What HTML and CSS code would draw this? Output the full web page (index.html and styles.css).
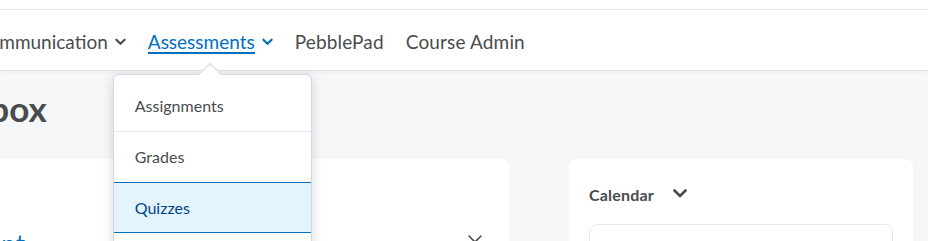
FILE: index.html
```html
<!DOCTYPE html>
<html lang="en">
<head>
  <meta charset="UTF-8" />
  <meta name="viewport" content="width=device-width, initial-scale=1.0" />
  <title>Sandbox</title>
  <link rel="stylesheet" href="styles.css">
</head>
<body>
  <div class="topstrip"></div>

  <nav class="navbar">
    <ul class="nav-list">
      <li class="nav-item">Communication <span class="chev"><svg viewBox="0 0 12 8" width="11" height="8"><path d="M1.5 1.5 6 6l4.5-4.5" fill="none" stroke="currentColor" stroke-width="2.4" stroke-linecap="round" stroke-linejoin="round"/></svg></span></li>
      <li class="nav-item active">
        <span class="nav-label">Assessments</span> <span class="chev"><svg viewBox="0 0 12 8" width="11" height="8"><path d="M1.5 1.5 6 6l4.5-4.5" fill="none" stroke="currentColor" stroke-width="2.4" stroke-linecap="round" stroke-linejoin="round"/></svg></span>
        <div class="dropdown">
          <span class="dropdown-arrow"></span>
          <ul class="menu">
            <li class="menu-item">Assignments</li>
            <li class="menu-item">Grades</li>
            <li class="menu-item selected">Quizzes</li>
            <li class="menu-item">Rubrics</li>
          </ul>
        </div>
      </li>
      <li class="nav-item">PebblePad</li>
      <li class="nav-item">Course Admin</li>
    </ul>
  </nav>

  <main class="main">
    <h1 class="page-title">Sandbox</h1>

    <div class="widgets">
      <section class="card card-left">
        <div class="card-head">
          <h2 class="card-link">Announcement</h2>
          <span class="card-chev"><svg viewBox="0 0 14 8" width="14" height="8"><path d="M1 1l6 6 6-6" fill="none" stroke="#494c4e" stroke-width="1.6" stroke-linecap="round" stroke-linejoin="round"/></svg></span>
        </div>
      </section>

      <section class="card card-right">
        <div class="cal-head">
          <h2 class="cal-title">Calendar</h2>
          <span class="cal-chev"><svg viewBox="0 0 14 9" width="14" height="9"><path d="M1.5 1.5 7 7l5.5-5.5" fill="none" stroke="currentColor" stroke-width="2.6" stroke-linecap="round" stroke-linejoin="round"/></svg></span>
        </div>
        <div class="cal-box"></div>
      </section>
    </div>
  </main>
</body>
</html>
```

FILE: styles.css
```css
* {
  box-sizing: border-box;
}

html, body {
  margin: 0;
  height: 100%;
  overflow: hidden;
}

body {
  font-family: 'Lato', 'Open Sans', sans-serif;
  background: #f6f7f8;
  color: #494c4e;
}

.topstrip {
  height: 10px;
  background: #ffffff;
  border-bottom: 1px solid #e3e5e8;
}

.navbar {
  background: #ffffff;
  height: 61px;
  border-bottom: 1px solid #e3e5e8;
  box-shadow: 0 2px 3px rgba(0,0,0,0.03);
  position: relative;
  z-index: 5;
}

.nav-list {
  list-style: none;
  margin: 0 0 0 -24px;
  padding: 3px 0 0;
  display: flex;
  align-items: center;
  height: 100%;
  gap: 22px;
}

.nav-item {
  font-size: 19px;
  position: relative;
  display: flex;
  align-items: center;
  white-space: nowrap;
  padding-bottom: 1px;
}

.nav-item + .nav-item + .nav-item {
  letter-spacing: 0.15px;
}

.chev {
  display: inline-flex;
  margin-left: 7px;
  margin-top: 2px;
}

.nav-item.active {
  color: #006fbf;
}

.nav-label {
  border-bottom: 2px solid #006fbf;
  line-height: 21px;
  padding-top: 2px;
}

.dropdown {
  position: absolute;
  top: 45px;
  left: -35px;
  width: 199px;
  background: #ffffff;
  border: 1px solid #d3d9e3;
  border-radius: 6px;
  box-shadow: 0 2px 12px rgba(0,0,0,0.15);
  color: #494c4e;
  letter-spacing: 0;
}

.dropdown-arrow {
  position: absolute;
  top: -9px;
  left: 88px;
  width: 16px;
  height: 16px;
  background: #ffffff;
  border-top: 1px solid #d3d9e3;
  border-left: 1px solid #d3d9e3;
  transform: rotate(45deg);
}

.menu {
  list-style: none;
  margin: 0;
  padding: 4px 0 0;
}

.menu-item {
  font-size: 16px;
  height: 51px;
  padding: 0 21px;
  display: flex;
  align-items: center;
  border-bottom: 1px solid #e3e9f1;
  position: relative;
}

.menu-item:first-child {
  height: 53px;
  padding-top: 2px;
}

.menu-item.selected {
  background: #e3f4fc;
  color: #004489;
  border-top: 1px solid #006fbf;
  border-bottom: 1px solid #006fbf;
  margin-top: -1px;
}

.main {
  padding-top: 15px;
}

.page-title {
  margin: 0 0 0 -87px;
  font-size: 35px;
  font-weight: 700;
  color: #494c4e;
  line-height: 44px;
}

.widgets {
  display: flex;
  gap: 60px;
  margin-top: 29px;
  margin-left: -40px;
}

.card {
  background: #ffffff;
  border-radius: 8px;
  height: 200px;
}

.card-left {
  width: 549px;
  padding: 66px 27px 0 30px;
}

.card-head {
  display: flex;
  justify-content: space-between;
  align-items: flex-start;
}

.card-link {
  margin: 2px 0 0 -140px;
  font-size: 26px;
  font-weight: 400;
  color: #006fbf;
  line-height: 34px;
}

.card-chev {
  display: flex;
  margin-top: 10px;
}

.card-right {
  width: 344px;
  padding: 25px 20px 0;
}

.cal-head {
  display: flex;
  align-items: center;
  height: 21px;
}

.cal-title {
  margin: 0;
  font-size: 16px;
  font-weight: 700;
  color: #494c4e;
  letter-spacing: 0.2px;
}

.cal-chev {
  display: inline-flex;
  margin-left: 19px;
  margin-top: -2px;
  color: #494c4e;
}

.cal-box {
  margin-top: 19px;
  height: 80px;
  border: 1px solid #e3e9f1;
  border-radius: 8px;
}
```
